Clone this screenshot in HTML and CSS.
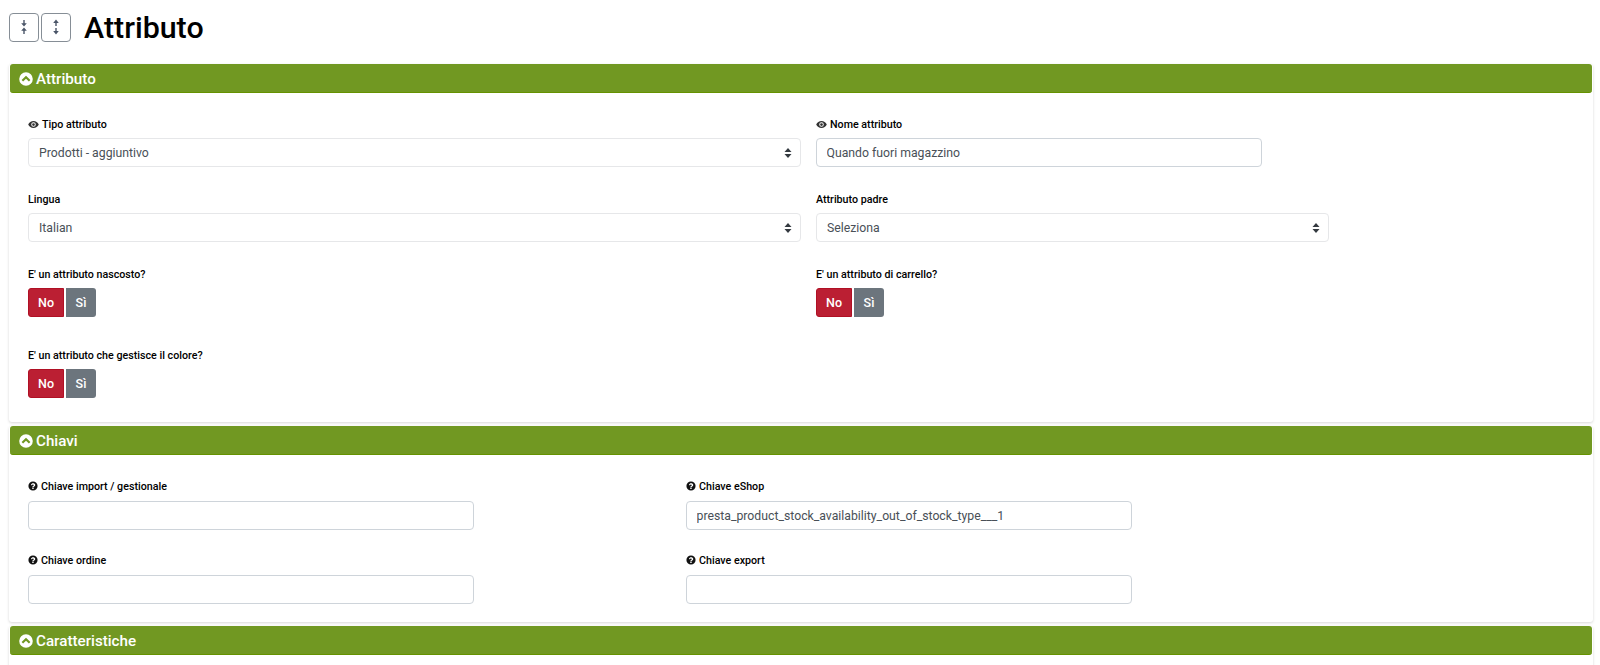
FILE: index.html
```html
<!DOCTYPE html>
<html>
<head>
  <meta charset="utf-8">
  <title>Attributo</title>
  <link rel="stylesheet" href="styles.css">
</head>
<body>
  <svg class="defs" width="0" height="0">
    <symbol id="i-eye" viewBox="0 0 16 12">
      <path fill-rule="evenodd" d="M8 1C4.600 1 1.800 3 .3 6c1.500 3 4.300 5 7.700 5s6.200-2 7.700-5C14.200 3 11.400 1 8 1zm0 1.700a3.300 3.300 0 1 1 0 6.600 3.300 3.300 0 0 1 0-6.600zM8 4a2 2 0 1 0 0 4 2 2 0 0 0 0-4z"/>
    </symbol>
    <symbol id="i-help" viewBox="0 0 12 12">
      <path fill-rule="evenodd" d="M6 .5a5.500 5.500 0 1 1 0 11 5.500 5.500 0 0 1 0-11zM5.100 8.100v1.500h1.700V8.100zM3.500 4.600l1.300.7c.1-.6.500-1 1.100-1 .6 0 1 .3 1 .7 0 .4-.3.600-.8.900-.6.400-1 .7-1 1.500v.2h1.700c0-.4.200-.6.700-.9.700-.4 1.200-.9 1.200-1.800C8.700 3.600 7.500 2.800 6 2.800c-1.200 0-2 .7-2.500 1.800z"/>
    </symbol>
    <symbol id="i-up" viewBox="0 0 14 14">
      <path fill-rule="evenodd" d="M7 .2a6.800 6.800 0 1 1 0 13.600A6.800 6.800 0 0 1 7 .2zm0 3.500L2.600 8.100l1.500 1.500L7 6.700l2.900 2.900 1.500-1.500z"/>
    </symbol>
  </svg>

  <div class="title-row">
    <button class="tool-btn" type="button">
      <svg width="8" height="16" viewBox="0 0 8 16"><path d="M4 1v5M4 15v-5" fill="none" stroke="#4a5568" stroke-width="1.400"/><path d="M1.200 4.200h5.600L4 7.400zM1.200 11.800h5.600L4 8.600z" fill="#4a5568"/></svg>
    </button>
    <button class="tool-btn" type="button">
      <svg width="8" height="16" viewBox="0 0 8 16"><path d="M4 3v4M4 13V9" fill="none" stroke="#4a5568" stroke-width="1.400"/><path d="M1.200 4h5.600L4 .6zM1.200 12h5.600L4 15.400z" fill="#4a5568"/></svg>
    </button>
    <h1>Attributo</h1>
  </div>

  <section class="card">
    <div class="card-header"><svg class="icon-up"><use href="#i-up"/></svg>Attributo</div>
    <div class="card-body grid-main">
      <div class="field">
        <label><svg class="icon-eye"><use href="#i-eye"/></svg>Tipo attributo</label>
        <select class="control control-select"><option>Prodotti - aggiuntivo</option></select>
      </div>
      <div class="field">
        <label><svg class="icon-eye"><use href="#i-eye"/></svg>Nome attributo</label>
        <input class="control w-name" type="text" value="Quando fuori magazzino">
      </div>
      <div class="field">
        <label>Lingua</label>
        <select class="control control-select"><option>Italian</option></select>
      </div>
      <div class="field">
        <label>Attributo padre</label>
        <select class="control control-select w-parent"><option>Seleziona</option></select>
      </div>
      <div class="field">
        <label>E' un attributo nascosto?</label>
        <div class="toggle"><span class="toggle-no">No</span><span class="toggle-yes">Sì</span></div>
      </div>
      <div class="field">
        <label>E' un attributo di carrello?</label>
        <div class="toggle"><span class="toggle-no">No</span><span class="toggle-yes">Sì</span></div>
      </div>
      <div class="field field-last">
        <label>E' un attributo che gestisce il colore?</label>
        <div class="toggle"><span class="toggle-no">No</span><span class="toggle-yes">Sì</span></div>
      </div>
    </div>
  </section>

  <section class="card">
    <div class="card-header"><svg class="icon-up"><use href="#i-up"/></svg>Chiavi</div>
    <div class="card-body grid-keys">
      <div class="field">
        <label><svg class="icon-help"><use href="#i-help"/></svg>Chiave import / gestionale</label>
        <input class="control" type="text">
      </div>
      <div class="field">
        <label><svg class="icon-help"><use href="#i-help"/></svg>Chiave eShop</label>
        <input class="control" type="text" value="presta_product_stock_availability_out_of_stock_type___1">
      </div>
      <div class="field">
        <label><svg class="icon-help"><use href="#i-help"/></svg>Chiave ordine</label>
        <input class="control" type="text">
      </div>
      <div class="field">
        <label><svg class="icon-help"><use href="#i-help"/></svg>Chiave export</label>
        <input class="control" type="text">
      </div>
    </div>
  </section>

  <section class="card card-open">
    <div class="card-header"><svg class="icon-up"><use href="#i-up"/></svg>Caratteristiche</div>
  </section>
</body>
</html>
```

FILE: styles.css
```css
html, body {
  height: 100%;
  overflow: hidden;
}
body {
  font-family: Roboto, sans-serif;
  margin: 0;
  padding: 12px 7px 0 9px;
  background: #fff;
  color: #212529;
}
.defs {
  position: absolute;
}
.title-row {
  display: flex;
  align-items: center;
  gap: 2px;
  height: 30px;
  margin-bottom: 22px;
}
.tool-btn {
  display: flex;
  align-items: center;
  justify-content: center;
  width: 30px;
  height: 29px;
  padding: 0;
  background: #fff;
  border: 1px solid #868e96;
  border-radius: 4px;
}
h1 {
  margin: 0 0 0 11px;
  padding-top: 2px;
  font-size: 30.4px;
  font-weight: 500;
  line-height: 30px;
  color: #000;
}
.card {
  background: #fff;
  box-shadow: 0 1px 3px rgba(0,0,0,0.16);
  border-radius: 3px;
  margin-bottom: 4px;
}
.card-open {
  height: 60px;
}
.card-header {
  display: flex;
  align-items: center;
  gap: 3px;
  height: 29px;
  box-sizing: border-box;
  margin: 0 1px;
  padding: 1px 9px 0;
  background: #719822;
  border-bottom: 1px solid #659200;
  border-radius: 3px;
  color: #fff;
  font-size: 15.200px;
  font-weight: 500;
}
.icon-up {
  width: 14px;
  height: 14px;
  fill: #fff;
}
.icon-eye {
  width: 11px;
  height: 9px;
  margin-right: 3px;
  fill: #333;
  vertical-align: -1px;
}
.icon-help {
  width: 10px;
  height: 10px;
  margin-right: 3px;
  fill: #111;
  vertical-align: -1px;
}
.card-body {
  display: grid;
  padding: 25px 19px 0;
}
.grid-main {
  grid-template-columns: 773px 1fr;
  column-gap: 15px;
  row-gap: 26px;
  padding-bottom: 24px;
}
.grid-keys {
  grid-template-columns: 446px 446px;
  column-gap: 212px;
  row-gap: 24px;
  padding-top: 25px;
  padding-bottom: 18px;
}
.grid-keys label {
  margin-bottom: 7px;
}
.field-last {
  grid-column: 1;
  margin-top: 6px;
}
label {
  display: block;
  height: 14px;
  margin-bottom: 6px;
  font-size: 10.7px;
  font-weight: 500;
  line-height: 14px;
  color: #000;
}
.control {
  display: block;
  box-sizing: border-box;
  width: 100%;
  height: 29px;
  padding: 0 9.5px;
  background: #fff;
  border: 1px solid #ced4da;
  border-radius: 4px;
  font-family: Roboto, sans-serif;
  font-size: 12.250px;
  color: #495057;
}
.control-select {
  appearance: none;
  padding: 0 10px;
  border-color: #e6e7e9;
  background-image: url("data:image/svg+xml,%3Csvg xmlns='http://www.w3.org/2000/svg' width='8' height='10'%3E%3Cpath d='M4 0l3.500 4H.5zM4 10L.5 6h7z' fill='%23343a40'/%3E%3C/svg%3E");
  background-repeat: no-repeat;
  background-position: right 8px center;
}
.w-name {
  width: 446px;
}
.w-parent {
  width: 513px;
}
.toggle {
  display: flex;
  gap: 2px;
  height: 29px;
}
.toggle span {
  display: flex;
  align-items: center;
  justify-content: center;
  box-sizing: border-box;
  font-size: 12.500px;
  font-weight: 500;
  color: #fff;
}
.toggle-no {
  width: 36px;
  background: #bb1f33;
  border: 1px solid #b01024;
  border-radius: 3px 0 0 3px;
}
.toggle-yes {
  width: 30px;
  background: #6c757d;
  border-radius: 0 3px 3px 0;
}
```
